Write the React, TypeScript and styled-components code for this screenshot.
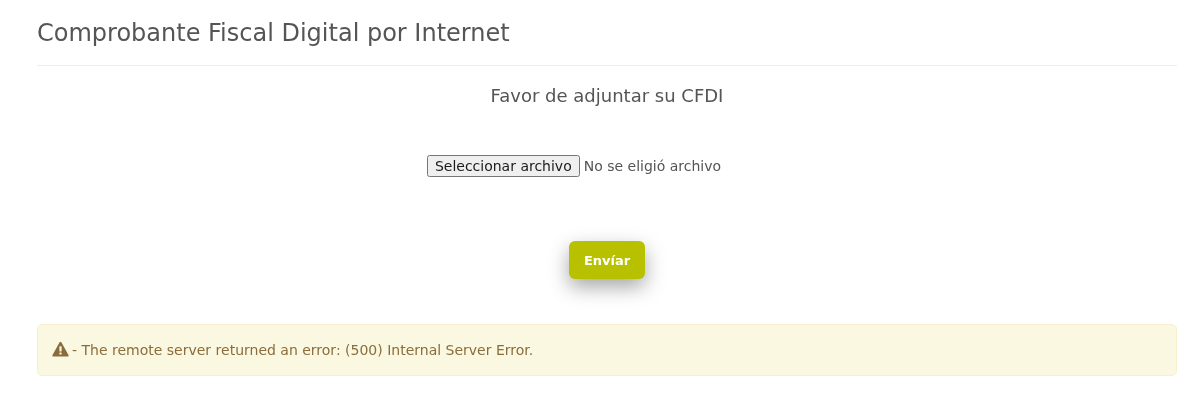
import React from "react";
import styled, { createGlobalStyle } from "styled-components";

const GlobalStyle = createGlobalStyle`
  html, body {
    margin: 0;
    padding: 0;
    background: #fff;
    font-family: "DejaVu Sans", sans-serif;
    color: #555;
  }
`;

const Page = styled.div`
  padding: 0 24px 0 37px;
  height: 403px;
  box-sizing: border-box;
  overflow: hidden;
  will-change: transform;
`;

const Title = styled.h3`
  margin: 0;
  padding: 18px 0 16px;
  font-size: 24px;
  line-height: 31px;
  font-weight: 400;
  color: #555;
  border-bottom: 1px solid #eee;
`;

const Subtitle = styled.h4`
  margin: 19px 0 0;
  text-align: center;
  font-size: 18px;
  line-height: 22px;
  font-weight: 400;
  color: #555;
`;

const FileRow = styled.div`
  display: flex;
  justify-content: center;
  align-items: center;
  gap: 4px;
  margin-top: 48px;
  padding-right: 66px;
  font-size: 14px;
`;

const FileButton = styled.button`
  font-family: "DejaVu Sans", sans-serif;
  font-size: 14px;
  height: 22px;
  padding: 1px 6px;
  box-sizing: border-box;
  color: #1a1a1a;
  white-space: nowrap;
`;

const FileName = styled.span`
  color: #555;
`;

const SubmitRow = styled.div`
  display: flex;
  justify-content: center;
  margin-top: 64px;
`;

const SubmitButton = styled.button`
  width: 76px;
  height: 38px;
  padding: 0;
  border: 0;
  border-radius: 6px;
  background: #b7c100;
  color: #fff;
  font-family: "DejaVu Sans", sans-serif;
  font-size: 13px;
  font-weight: 700;
  box-shadow: 0 8px 20px rgba(0, 0, 0, 0.35);
`;

const Alert = styled.div`
  display: flex;
  align-items: center;
  gap: 3px;
  margin-top: 45px;
  height: 52px;
  box-sizing: border-box;
  padding: 0 14px;
  background: #fbf8e1;
  border: 1px solid #f9efcf;
  border-radius: 5px;
  color: #8a6d3b;
  font-size: 14px;
`;

const WarnSvg = styled.svg`
  flex: none;
  margin-bottom: 3px;
`;

const WarnIcon = () => (
  <WarnSvg width="17" height="16" viewBox="0 0 17 16" aria-hidden="true">
    <path
      d="M8.500.8c.4 0 .7.2.9.5l7.200 13c.3.6-.1 1.200-.8 1.200H1.200c-.7 0-1.100-.6-.8-1.200l7.200-13c.2-.3.500-.5.9-.5z"
      fill="#8a6d3b"
    />
    <rect x="7.400" y="5.200" width="2.200" height="5.200" rx=".5" fill="#fbf8e1" />
    <rect x="7.400" y="11.400" width="2.200" height="2.100" rx=".5" fill="#fbf8e1" />
  </WarnSvg>
);

export default function App() {
  return (
    <Page>
      <GlobalStyle />
      <Title>Comprobante Fiscal Digital por Internet</Title>
      <Subtitle>Favor de adjuntar su CFDI</Subtitle>
      <FileRow>
        <FileButton type="button">Seleccionar archivo</FileButton>
        <FileName>No se eligió archivo</FileName>
      </FileRow>
      <SubmitRow>
        <SubmitButton type="button">Envíar</SubmitButton>
      </SubmitRow>
      <Alert>
        <WarnIcon />
        <span>- The remote server returned an error: (500) Internal Server Error.</span>
      </Alert>
    </Page>
  );
}
